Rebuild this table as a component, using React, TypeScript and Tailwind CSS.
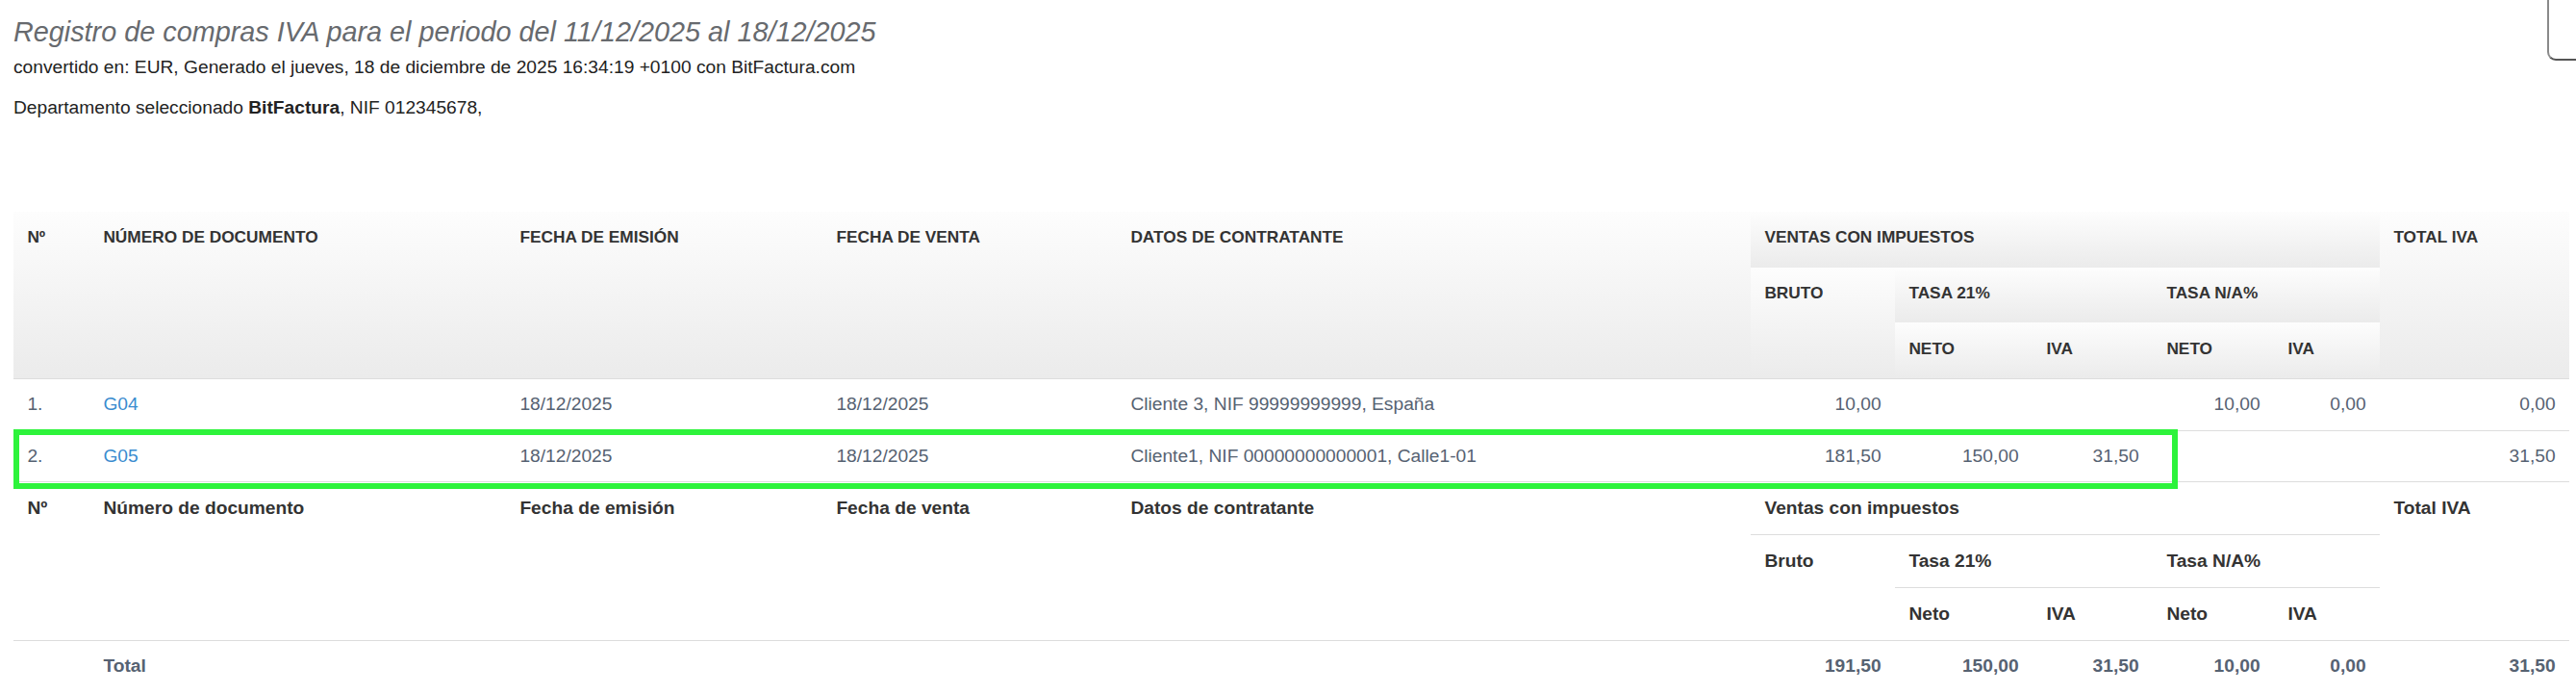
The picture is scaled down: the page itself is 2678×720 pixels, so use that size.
import * as React from "react";

const thTop =
	"bg-linear-to-b from-[#fdfdfd] to-[#ebebeb] px-[14.4px] pt-[14.4px] pb-[19.2px] text-left align-top text-[17.28px] font-bold uppercase leading-6 text-[#333]";
const thFoot = "border-t border-[#ddd] px-[14.4px] pt-[15px] pb-[14.8px] text-left align-top font-bold leading-6 text-[#333]";
const td = "border-t border-[#ddd] px-[14.4px] py-[14.4px] align-top leading-6 text-[#566272]";
const tdNum = "border-t border-[#ddd] px-[14.4px] py-[14.4px] text-right align-top leading-6 text-[#566272]";
const tdTotal = "border-t border-[#ddd] px-[14.4px] py-[14.4px] text-right align-top font-bold leading-6 text-[#566272]";

type Row = {
	n: string;
	doc: string;
	emision: string;
	venta: string;
	cliente: string;
	values: string[];
};

const rows: Row[] = [
	{
		n: "1.",
		doc: "G04",
		emision: "18/12/2025",
		venta: "18/12/2025",
		cliente: "Cliente 3, NIF 99999999999, España",
		values: ["10,00", "", "", "10,00", "0,00", "0,00"],
	},
	{
		n: "2.",
		doc: "G05",
		emision: "18/12/2025",
		venta: "18/12/2025",
		cliente: "Cliente1, NIF 00000000000001, Calle1-01",
		values: ["181,50", "150,00", "31,50", "", "", "31,50"],
	},
];

const totals = ["191,50", "150,00", "31,50", "10,00", "0,00", "31,50"];

export default function App() {
	return (
		<div className="relative min-h-screen bg-white pl-[14px] font-['Liberation_Sans',Arial,sans-serif] text-[19.2px] text-[#222]">
			{/* toolbar peeking in at the top right */}
			<div className="absolute left-[2648px] top-[-12px] h-[75px] w-[60px] rounded-[9px] border-2 border-[#8a8a8a] border-b-[#555] bg-white" />

			<h1 className="pt-[17px] text-[28.8px] font-normal italic leading-[33px] text-[#676a6e]">
				Registro de compras IVA para el periodo del 11/12/2025 al 18/12/2025
			</h1>
			<p className="mt-[9px] leading-[22px]">
				convertido en: EUR, Generado el jueves, 18 de diciembre de 2025 16:34:19 +0100 con BitFactura.com
			</p>
			<p className="mt-[20px] leading-[22px]">
				Departamento seleccionado <b>BitFactura</b>, NIF 012345678,
			</p>

			<table className="mt-[97px] w-[2657px] table-fixed border-collapse">
				<colgroup>
					<col className="w-[79px]" />
					<col className="w-[433px]" />
					<col className="w-[329px]" />
					<col className="w-[306px]" />
					<col className="w-[659px]" />
					<col className="w-[150px]" />
					<col className="w-[143px]" />
					<col className="w-[125px]" />
					<col className="w-[126px]" />
					<col className="w-[110px]" />
					<col className="w-[197px]" />
				</colgroup>
				<thead>
					<tr>
						<th rowSpan={3} className={thTop}>Nº</th>
						<th rowSpan={3} className={thTop}>Número de documento</th>
						<th rowSpan={3} className={thTop}>Fecha de emisión</th>
						<th rowSpan={3} className={thTop}>Fecha de venta</th>
						<th rowSpan={3} className={thTop}>Datos de contratante</th>
						<th colSpan={5} className={thTop}>Ventas con impuestos</th>
						<th rowSpan={3} className={thTop}>Total IVA</th>
					</tr>
					<tr>
						<th rowSpan={2} className={thTop}>Bruto</th>
						<th colSpan={2} className={thTop}>Tasa 21%</th>
						<th colSpan={2} className={thTop}>Tasa N/A%</th>
					</tr>
					<tr>
						<th className={thTop}>Neto</th>
						<th className={thTop}>IVA</th>
						<th className={thTop}>Neto</th>
						<th className={thTop}>IVA</th>
					</tr>
				</thead>
				<tbody>
					{rows.map((r, i) => (
						<tr key={r.n}>
							<td className={i === 1 ? td + " relative" : td}>
								{r.n}
								{i === 1 && (
									<div className="pointer-events-none absolute left-0 top-[-2px] h-[62px] w-[2250px] border-[6px] border-[#2df33b]" />
								)}
							</td>
							<td className={td}>
								<a href="#" className="text-[#3a8ccf]">
									{r.doc}
								</a>
							</td>
							<td className={td}>{r.emision}</td>
							<td className={td}>{r.venta}</td>
							<td className={td}>{r.cliente}</td>
							{r.values.map((v, j) => (
								<td key={j} className={tdNum}>
									{v}
								</td>
							))}
						</tr>
					))}
				</tbody>
				<tfoot>
					<tr>
						<th rowSpan={3} className={thFoot}>Nº</th>
						<th rowSpan={3} className={thFoot}>Número de documento</th>
						<th rowSpan={3} className={thFoot}>Fecha de emisión</th>
						<th rowSpan={3} className={thFoot}>Fecha de venta</th>
						<th rowSpan={3} className={thFoot}>Datos de contratante</th>
						<th colSpan={5} className={thFoot}>Ventas con impuestos</th>
						<th rowSpan={3} className={thFoot}>Total IVA</th>
					</tr>
					<tr>
						<th rowSpan={2} className={thFoot}>Bruto</th>
						<th colSpan={2} className={thFoot}>Tasa 21%</th>
						<th colSpan={2} className={thFoot}>Tasa N/A%</th>
					</tr>
					<tr>
						<th className={thFoot}>Neto</th>
						<th className={thFoot}>IVA</th>
						<th className={thFoot}>Neto</th>
						<th className={thFoot}>IVA</th>
					</tr>
					<tr>
						<td className={td}></td>
						<td className={td + " font-bold text-[#333]"}>Total</td>
						<td className={td}></td>
						<td className={td}></td>
						<td className={td}></td>
						{totals.map((v, j) => (
							<td key={j} className={tdTotal}>
								{v}
							</td>
						))}
					</tr>
				</tfoot>
			</table>
		</div>
	);
}
